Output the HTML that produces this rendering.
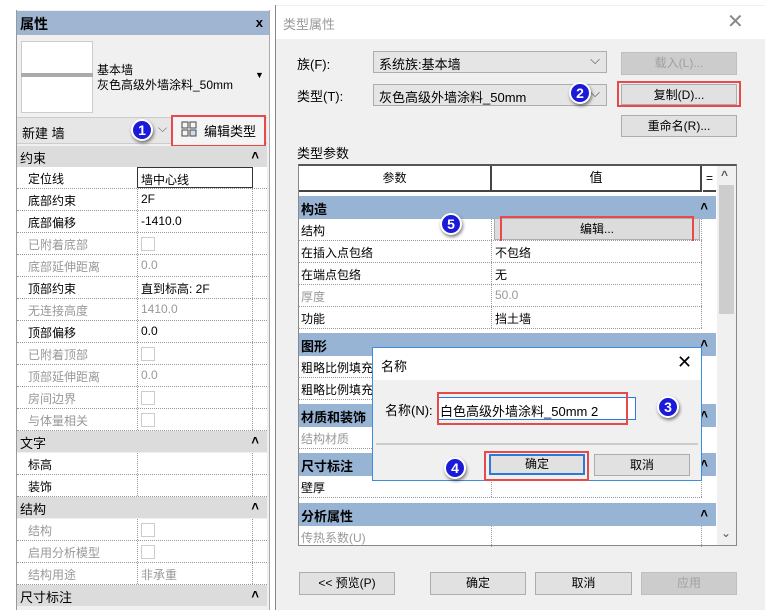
<!DOCTYPE html>
<html><head><meta charset="utf-8"><style>
*{margin:0;padding:0;box-sizing:border-box}
body{width:770px;height:615px;background:#fff;position:relative;overflow:hidden;font-family:"Liberation Sans","Noto Sans CJK SC",sans-serif;font-size:12px;color:#000}
.a{position:absolute}
.lp{left:16px;top:10px;width:254px;height:600px;background:#f0f0f0;border-left:1px solid #999;border-right:1px solid #aaa}
.row{position:absolute;left:17px;width:250px;height:22px;border-bottom:1px dotted #999;background:#fff}
.row .l{position:absolute;left:11px;top:3px}
.row .v{position:absolute;left:120px;top:0;height:21px;width:116px;border-left:1px dotted #999;border-right:1px dotted #999;padding:3px 0 0 3px}
.g{color:#999}
.hd{position:absolute;left:17px;width:250px;height:21px;background:#dcdcdc;font-size:13px;padding:2px 0 0 3px}
.hd:after{content:"˄";position:absolute;right:8px;top:2px;font-weight:bold}
.cb{display:inline-block;width:14px;height:14px;border:1px solid #ccc;background:#fff;margin-top:1px}
.btn{position:absolute;background:#e1e1e1;border:1px solid #adadad;text-align:center;font-size:12px;line-height:20px}
.dis{color:#a0a0a0;background:#ccc;border-color:#bfbfbf}
.red{position:absolute;border:2px solid #e64a4a}
.num{position:absolute;width:22px;height:22px;border-radius:50%;background:#1a1ad8;color:#fff;border:2px solid #fff;box-shadow:1px 2px 3px rgba(0,0,0,.5);font-weight:bold;font-size:14px;text-align:center;line-height:18px}
.tr{position:absolute;left:299px;width:403px;height:22px;border-bottom:1px dotted #999;background:#fff}
.tr .l{position:absolute;left:2px;top:3px}
.tr .v{position:absolute;left:192px;top:0;height:21px;width:211px;border-left:1px dotted #999;border-right:1px dotted #999;padding:3px 0 0 3px}
.th{position:absolute;left:299px;width:417px;height:23px;background:#98b4d4;font-weight:bold;font-size:13px;padding:3px 0 0 2px}
.th:after{content:"˄";position:absolute;right:8px;top:3px;font-weight:bold}
.combo{position:absolute;background:#e5e5e5;border:1px solid #adadad;padding:2px 5px;font-size:13px}
.combo:after{content:"⌵";position:absolute;right:6px;top:0;color:#444}
</style></head><body>
<div class="a lp"></div>
<div class="a" style="left:17px;top:11px;width:252px;height:24px;background:#9fb5d1;font-weight:bold;font-size:14px;padding:3px 0 0 3px">属性<span style="position:absolute;right:6px;top:4px;font-size:13px">x</span></div>
<div class="a" style="left:21px;top:41px;width:72px;height:72px;background:#fff;border:1px solid #ccc"></div>
<div class="a" style="left:21px;top:73px;width:72px;height:4px;background:#aaa"></div>
<div class="a" style="left:97px;top:63px;font-size:12px;line-height:15px">基本墙<br>灰色高级外墙涂料_50mm</div>
<div class="a" style="left:255px;top:70px;font-size:9px">▼</div>
<div class="a" style="left:17px;top:117px;width:250px;height:27px;background:#e6e6e6;border-top:1px solid #ccc;border-bottom:1px solid #ccc"></div>
<div class="a" style="left:22px;top:123px;font-size:13px">新建 墙</div>
<div class="a" style="left:158px;top:121px;color:#666">⌵</div>
<div class="a" style="left:173px;top:117px;width:92px;height:27px;background:#f4f4f4"></div>
<div class="a" style="left:181px;top:121px;width:16px;height:16px"><svg width="16" height="16"><rect x="1" y="1" width="6" height="6" fill="none" stroke="#444"/><rect x="1" y="9" width="6" height="6" fill="none" stroke="#444"/><rect x="9" y="1" width="6" height="6" fill="none" stroke="#444"/><rect x="9" y="9" width="6" height="6" fill="#cde" stroke="#444"/></svg></div>
<div class="a" style="left:204px;top:121px;font-size:13px">编辑类型</div>
<div class="red" style="left:171px;top:115px;width:95px;height:32px"></div>
<div class="num" style="left:131px;top:119px">1</div>

<div class="hd" style="top:146px">约束</div>
<div class="row" style="top:167px"><span class="l">定位线</span><span class="v" style="border:1px solid #333;background:#fff">墙中心线</span></div>
<div class="row" style="top:189px"><span class="l">底部约束</span><span class="v">2F</span></div>
<div class="row" style="top:211px"><span class="l">底部偏移</span><span class="v">-1410.0</span></div>
<div class="row" style="top:233px"><span class="l g">已附着底部</span><span class="v"><i class="cb"></i></span></div>
<div class="row" style="top:255px"><span class="l g">底部延伸距离</span><span class="v g">0.0</span></div>
<div class="row" style="top:277px"><span class="l">顶部约束</span><span class="v">直到标高: 2F</span></div>
<div class="row" style="top:299px"><span class="l g">无连接高度</span><span class="v g">1410.0</span></div>
<div class="row" style="top:321px"><span class="l">顶部偏移</span><span class="v">0.0</span></div>
<div class="row" style="top:343px"><span class="l g">已附着顶部</span><span class="v"><i class="cb"></i></span></div>
<div class="row" style="top:365px"><span class="l g">顶部延伸距离</span><span class="v g">0.0</span></div>
<div class="row" style="top:387px"><span class="l g">房间边界</span><span class="v"><i class="cb"></i></span></div>
<div class="row" style="top:409px"><span class="l g">与体量相关</span><span class="v"><i class="cb"></i></span></div>
<div class="hd" style="top:431px">文字</div>
<div class="row" style="top:453px"><span class="l">标高</span><span class="v"></span></div>
<div class="row" style="top:475px"><span class="l">装饰</span><span class="v"></span></div>
<div class="hd" style="top:497px">结构</div>
<div class="row" style="top:519px"><span class="l g">结构</span><span class="v"><i class="cb"></i></span></div>
<div class="row" style="top:541px"><span class="l g">启用分析模型</span><span class="v"><i class="cb"></i></span></div>
<div class="row" style="top:563px"><span class="l g">结构用途</span><span class="v g">非承重</span></div>
<div class="hd" style="top:585px">尺寸标注</div>

<!-- type properties dialog -->
<div class="a" style="left:275px;top:5px;width:490px;height:605px;background:#f0f0f0;border-left:1px solid #888"></div>
<div class="a" style="left:276px;top:6px;width:489px;height:33px;background:#fff"></div>
<div class="a" style="left:283px;top:14px;color:#999;font-size:13px">类型属性</div>
<div class="a" style="left:727px;top:9px;color:#888;font-size:20px;font-weight:100">✕</div>
<div class="a" style="left:297px;top:54px;font-size:13px">族(F):</div>
<div class="combo" style="left:373px;top:51px;width:234px;height:22px">系统族:基本墙</div>
<div class="btn dis" style="left:621px;top:52px;width:116px;height:23px">载入(L)...</div>
<div class="a" style="left:297px;top:86px;font-size:13px">类型(T):</div>
<div class="combo" style="left:373px;top:84px;width:234px;height:22px">灰色高级外墙涂料_50mm</div>
<div class="btn" style="left:621px;top:84px;width:116px;height:21px">复制(D)...</div>
<div class="red" style="left:617px;top:81px;width:124px;height:26px"></div>
<div class="num" style="left:569px;top:82px">2</div>
<div class="btn" style="left:621px;top:115px;width:116px;height:22px">重命名(R)...</div>
<div class="a" style="left:297px;top:143px;font-size:13px">类型参数</div>
<div class="a" style="left:298px;top:164px;width:439px;height:382px;background:#fff;border:1px solid #888;border-top:2px solid #555"></div>
<div class="a" style="left:299px;top:166px;width:193px;height:26px;border-right:2px solid #444;border-bottom:2px solid #444;text-align:center;line-height:24px">参数</div>
<div class="a" style="left:492px;top:166px;width:210px;height:26px;border-right:2px solid #444;border-bottom:2px solid #444;text-align:center;line-height:24px;font-size:13px">值</div>
<div class="a" style="left:703px;top:166px;width:13px;height:26px;border-bottom:2px solid #444;text-align:center;line-height:24px">=</div>
<div class="a" style="left:717px;top:166px;width:19px;height:379px;background:#f0f0f0"></div>
<div class="a" style="left:719px;top:185px;width:15px;height:129px;background:#cdcdcd"></div>
<div class="a" style="left:721px;top:168px;font-size:12px;font-weight:bold;color:#555">^</div>
<div class="a" style="left:721px;top:526px;font-size:12px;color:#555">⌄</div>

<div class="th" style="top:196px">构造</div>
<div class="tr" style="top:219px"><span class="l">结构</span><span class="v"></span></div>
<div class="btn" style="left:494px;top:218px;width:206px;height:22px;background:#dcdcdc">编辑...</div>
<div class="red" style="left:500px;top:216px;width:194px;height:37px"></div>
<div class="num" style="left:440px;top:213px">5</div>
<div class="tr" style="top:241px"><span class="l">在插入点包络</span><span class="v">不包络</span></div>
<div class="tr" style="top:263px"><span class="l">在端点包络</span><span class="v">无</span></div>
<div class="tr" style="top:285px"><span class="l g">厚度</span><span class="v g">50.0</span></div>
<div class="tr" style="top:307px"><span class="l">功能</span><span class="v">挡土墙</span></div>
<div class="th" style="top:333px">图形</div>
<div class="tr" style="top:356px"><span class="l">粗略比例填充</span><span class="v"></span></div>
<div class="tr" style="top:378px"><span class="l">粗略比例填充</span><span class="v"></span></div>
<div class="th" style="top:404px">材质和装饰</div>
<div class="tr" style="top:427px"><span class="l g">结构材质</span><span class="v"></span></div>
<div class="th" style="top:453px">尺寸标注</div>
<div class="tr" style="top:476px"><span class="l">壁厚</span><span class="v"></span></div>
<div class="th" style="top:503px">分析属性</div>
<div class="tr" style="top:526px;height:19px;border:none"><span class="l g">传热系数(U)</span><span class="v"></span></div>

<div class="btn" style="left:299px;top:572px;width:96px;height:23px">&lt;&lt; 预览(P)</div>
<div class="btn" style="left:430px;top:572px;width:96px;height:23px">确定</div>
<div class="btn" style="left:535px;top:572px;width:97px;height:23px">取消</div>
<div class="btn dis" style="left:641px;top:572px;width:96px;height:23px">应用</div>

<!-- name dialog -->
<div class="a" style="left:372px;top:347px;width:330px;height:134px;background:#f0f0f0;border:1px solid #3c8ce0"></div>
<div class="a" style="left:373px;top:348px;width:328px;height:32px;background:#fff"></div>
<div class="a" style="left:381px;top:356px;font-size:13px">名称</div>
<div class="a" style="left:677px;top:352px;font-size:18px">✕</div>
<div class="a" style="left:385px;top:400px;font-size:13px">名称(N):</div>
<div class="a" style="left:437px;top:397px;width:199px;height:23px;background:#fff;border:1px solid #2b7ad8;padding:3px 2px;font-size:13px">白色高级外墙涂料_50mm 2</div>
<div class="red" style="left:437px;top:392px;width:191px;height:33px"></div>
<div class="num" style="left:657px;top:396px">3</div>
<div class="a" style="left:376px;top:443px;width:322px;height:2px;background:#ccc"></div>
<div class="btn" style="left:489px;top:454px;width:96px;height:21px;border:2px solid #2b7ad8;line-height:17px">确定</div>
<div class="red" style="left:484px;top:451px;width:105px;height:30px"></div>
<div class="btn" style="left:594px;top:454px;width:96px;height:22px">取消</div>
<div class="num" style="left:444px;top:457px">4</div>
</body></html>
